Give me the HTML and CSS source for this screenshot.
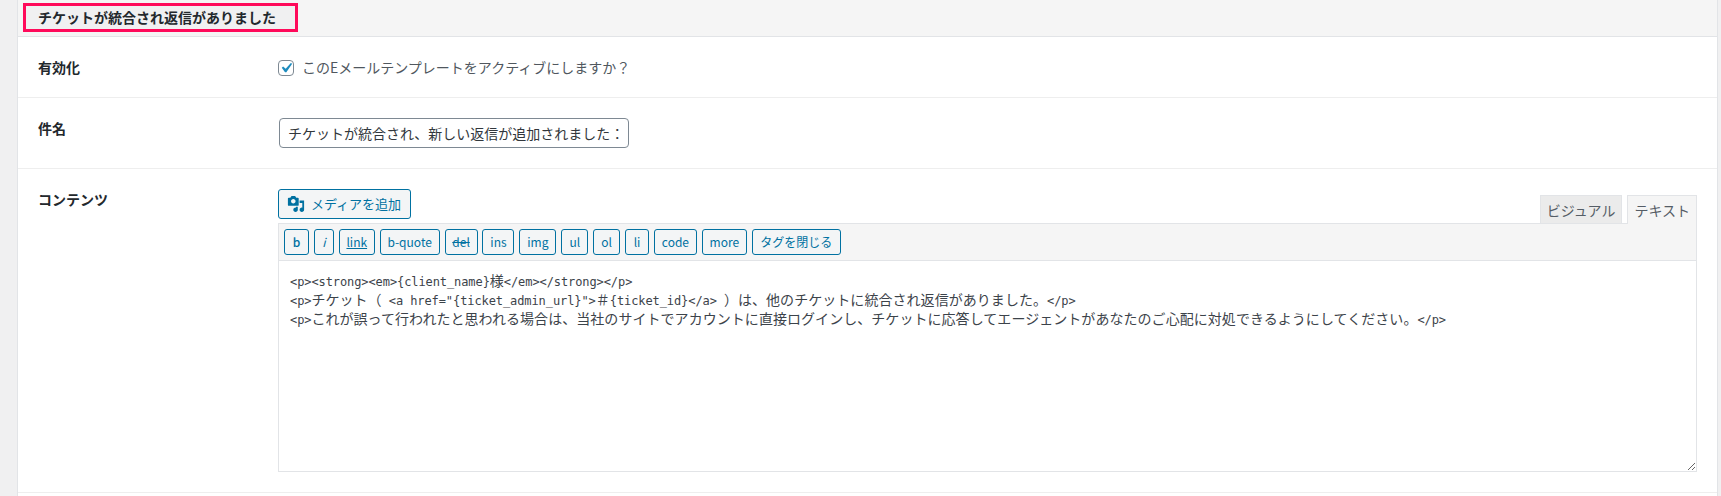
FILE: index.html
```html
<!DOCTYPE html>
<html lang="ja">
<head>
<meta charset="utf-8">
<title>チケットが統合され返信がありました</title>
<link rel="stylesheet" href="styles.css">
</head>
<body>
<section class="panel">
  <header class="panel-head">
    <h2 class="panel-title">チケットが統合され返信がありました</h2>
  </header>
  <div class="row">
    <div class="row-label">有効化</div>
    <div class="row-field">
      <label class="check-line"><input class="check" type="checkbox" checked>このEメールテンプレートをアクティブにしますか？</label>
    </div>
  </div>
  <div class="row">
    <div class="row-label">件名</div>
    <div class="row-field">
      <input class="subject" type="text" value="チケットが統合され、新しい返信が追加されました：">
    </div>
  </div>
  <div class="row">
    <div class="row-label">コンテンツ</div>
    <div class="row-field">
      <div class="editor-top">
        <button class="media-btn" type="button">
          <svg class="media-icon" viewBox="0 0 20 20" aria-hidden="true"><path d="M13 11V4c0-.55-.45-1-1-1h-1.67L9 1H5L3.67 3H2c-.55 0-1 .45-1 1v7c0 .55.45 1 1 1h10c.55 0 1-.45 1-1zM7 4.500c1.380 0 2.500 1.120 2.500 2.500S8.380 9.500 7 9.500 4.500 8.380 4.500 7 5.620 4.500 7 4.500zM14 6h5v10.500c0 1.380-1.120 2.500-2.500 2.500S14 17.880 14 16.500s1.120-2.500 2.500-2.500c.17 0 .34.020.5.050V9h-3V6zm-4 8.050V13h2v3.500c0 1.380-1.120 2.500-2.500 2.500S7 17.880 7 16.500 8.120 14 9.500 14c.17 0 .34.020.5.050z"/></svg>
          メディアを追加
        </button>
        <div class="tabs">
          <button class="tab" type="button">ビジュアル</button>
          <button class="tab tab-active" type="button">テキスト</button>
        </div>
      </div>
      <div class="toolbar">
        <button class="qt qt-b" type="button">b</button>
        <button class="qt qt-i" type="button">i</button>
        <button class="qt qt-link" type="button">link</button>
        <button class="qt" type="button">b-quote</button>
        <button class="qt qt-del" type="button">del</button>
        <button class="qt" type="button">ins</button>
        <button class="qt" type="button">img</button>
        <button class="qt" type="button">ul</button>
        <button class="qt" type="button">ol</button>
        <button class="qt" type="button">li</button>
        <button class="qt" type="button">code</button>
        <button class="qt" type="button">more</button>
        <button class="qt" type="button">タグを閉じる</button>
      </div>
      <div class="code-area">
        <div class="code-line">&lt;p&gt;&lt;strong&gt;&lt;em&gt;{client_name}<span class="cjk">様</span>&lt;/em&gt;&lt;/strong&gt;&lt;/p&gt;</div>
        <div class="code-line">&lt;p&gt;<span class="cjk">チケット（</span> &lt;a href="{ticket_admin_url}"&gt;<span class="cjk">＃</span>{ticket_id}&lt;/a&gt; <span class="cjk">）は、他のチケットに統合され返信がありました。</span>&lt;/p&gt;</div>
        <div class="code-line">&lt;p&gt;<span class="cjk">これが誤って行われたと思われる場合は、当社のサイトでアカウントに直接ログインし、チケットに応答してエージェントがあなたのご心配に対処できるようにしてください。</span>&lt;/p&gt;</div>
      </div>
    </div>
  </div>
  <div class="row-empty"></div>
</section>
</body>
</html>
```

FILE: styles.css
```css
* { box-sizing: border-box; }

html, body {
  margin: 0;
  height: 496px;
  overflow: hidden;
}

body {
  background: #f0f0f1;
  color: #32373c;
  font: 14px/20px "Noto Sans CJK JP", "Noto Sans", sans-serif;
}

.panel {
  width: 1701px;
  height: 496px;
  margin-left: 17px;
  background: #fff;
  border-left: 1px solid #e2e4e7;
  border-right: 1px solid #e2e4e7;
}

.panel-head {
  height: 37px;
  padding: 3px 0 0 5px;
  background: #f5f5f5;
  border-bottom: 1px solid #e2e4e7;
}

.panel-title {
  width: 275px;
  height: 29px;
  margin: 0;
  padding: 0 0 0 12px;
  border: 3px solid #ff0a5a;
  background: #f0f0f1;
  color: #23282d;
  font-size: 14px;
  font-weight: 700;
  line-height: 23px;
}

.row {
  display: flex;
  padding: 20px;
  border-bottom: 1px solid #eeeeee;
}

.row-label {
  flex: none;
  width: 240px;
  color: #23282d;
  font-weight: 700;
  line-height: 20px;
}

.row-field {
  flex: 1;
  min-width: 0;
}

.check-line {
  display: flex;
  align-items: center;
  height: 20px;
  color: #50575e;
}

.check {
  appearance: none;
  flex: none;
  width: 16px;
  height: 16px;
  margin: 1px 8px 0 0;
  border: 1px solid #7e8993;
  border-radius: 4px;
  background: #fff url("data:image/svg+xml,%3Csvg xmlns='http://www.w3.org/2000/svg' viewBox='0 0 20 20'%3E%3Cpath fill='%231e8cbe' d='M14.830 4.890l1.340.940-5.810 8.380H9.020L5.780 9.670l1.340-1.250 2.570 2.400z'/%3E%3C/svg%3E") center / 20px no-repeat;
}

.subject {
  display: block;
  width: 350px;
  height: 30px;
  margin-left: 1px;
  padding: 0 8px;
  border: 1px solid #7e8993;
  border-radius: 4px;
  background: #fff;
  color: #32373c;
  font: inherit;
}

.editor-top {
  display: flex;
  justify-content: space-between;
  align-items: flex-end;
  height: 34px;
}

.media-btn {
  display: flex;
  align-items: center;
  align-self: flex-start;
  gap: 6px;
  width: 133px;
  height: 30px;
  padding: 0 0 0 8px;
  border: 1px solid #0071a1;
  border-radius: 3px;
  background: #f3f5f6;
  color: #0071a1;
  font: inherit;
  font-size: 13px;
}

.media-icon {
  flex: none;
  width: 18px;
  height: 18px;
  fill: #0071a1;
}

.tabs {
  display: flex;
  gap: 5px;
  position: relative;
  z-index: 1;
}

.tab {
  height: 28px;
  padding: 0 6px;
  border: 1px solid #e2e4e7;
  border-bottom: 0;
  background: #ebebeb;
  color: #555d66;
  font: inherit;
}

.tab-active {
  height: 29px;
  margin-bottom: -1px;
  background: #f5f5f5;
}

.toolbar {
  display: grid;
  grid-template-columns: 25px 20px 36px 60px 33px 32px 37px 27px 27px 24px 43px 45px 89px;
  gap: 4.9px;
  height: 38px;
  padding: 5px 5px 0;
  background: #f5f5f5;
  border: 1px solid #e2e4e7;
}

.qt {
  height: 26px;
  padding: 0;
  border: 1px solid #0071a1;
  border-radius: 3px;
  background: #f3f5f6;
  color: #0071a1;
  font: inherit;
  font-size: 12px;
  line-height: 22px;
}

.qt-b { font-weight: 500; }
.qt-i { font-style: italic; }
.qt-link { text-decoration: underline; }
.qt-del { text-decoration: line-through; }

.code-area {
  height: 211px;
  padding: 12px 11px;
  overflow: auto;
  resize: vertical;
  background: #fff;
  border: 1px solid #e2e4e7;
  border-top: 0;
  color: #3c434a;
  font: 12px/19px "DejaVu Sans Mono", monospace;
  letter-spacing: -0.09px;
  white-space: nowrap;
}

.code-line {
  height: 19px;
}

.cjk {
  font-family: "Noto Sans CJK JP", sans-serif;
  font-size: 14px;
  line-height: 1;
  letter-spacing: 0.05px;
}
```
